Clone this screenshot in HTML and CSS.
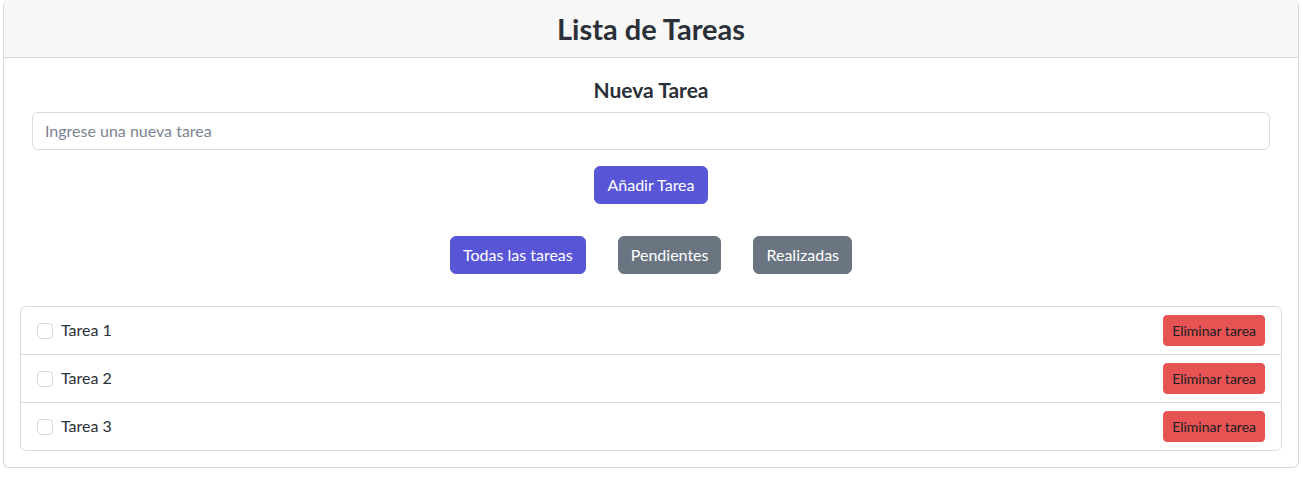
FILE: index.html
```html
<!DOCTYPE html>
<html lang="es">
<head>
<meta charset="utf-8">
<title>Lista de Tareas</title>
<link rel="stylesheet" href="styles.css">
</head>
<body>
<div class="card">
  <div class="card-header">
    <h3 class="title">Lista de Tareas</h3>
  </div>
  <div class="card-body">
    <h5 class="subtitle">Nueva Tarea</h5>
    <div class="input-wrap">
      <input class="form-control" type="text" placeholder="Ingrese una nueva tarea">
    </div>
    <div class="add-row">
      <button class="btn btn-primary">Añadir Tarea</button>
    </div>
    <div class="filters">
      <button class="btn btn-primary">Todas las tareas</button>
      <button class="btn btn-secondary">Pendientes</button>
      <button class="btn btn-secondary">Realizadas</button>
    </div>
    <ul class="list">
      <li class="list-item">
        <label class="item-label"><span class="check"></span>Tarea 1</label>
        <button class="btn btn-sm btn-danger">Eliminar tarea</button>
      </li>
      <li class="list-item">
        <label class="item-label"><span class="check"></span>Tarea 2</label>
        <button class="btn btn-sm btn-danger">Eliminar tarea</button>
      </li>
      <li class="list-item">
        <label class="item-label"><span class="check"></span>Tarea 3</label>
        <button class="btn btn-sm btn-danger">Eliminar tarea</button>
      </li>
    </ul>
  </div>
</div>
</body>
</html>
```
FILE: styles.css
```css
* { box-sizing: border-box; }
body {
  margin: 0;
  padding: 0 3px;
  font-family: Lato, "Noto Sans", sans-serif;
  font-size: 16px;
  color: #2a2f38;
  background: #fff;
}
.card {
  border: 1px solid #d6d8dc;
  border-radius: 6px;
  border-top: none;
  overflow: hidden;
}
.card-header {
  background: #f7f7f7;
  border-bottom: 1px solid #d3d3d3;
  height: 58px;
  padding-top: 12px;
  text-align: center;
}
.title {
  margin: 0;
  font-size: 29px;
  line-height: 34px;
  font-weight: 700;
  color: #2a2f38;
}
.card-body {
  padding: 20px 16px 16px;
}
.subtitle {
  margin: 0 0 10px;
  text-align: center;
  font-size: 21px;
  line-height: 24px;
  font-weight: 700;
}
.input-wrap {
  padding: 0 12px;
}
.form-control {
  display: block;
  width: 100%;
  height: 38px;
  padding: 5px 12px 7px;
  border: 1px solid #d8dbe0;
  border-radius: 6px;
  font-family: inherit;
  font-size: 16px;
  color: #2a2f38;
  outline: none;
}
.form-control::placeholder { color: #7b8491; }
.add-row {
  display: flex;
  justify-content: center;
  margin-top: 16px;
}
.filters {
  display: flex;
  justify-content: center;
  gap: 32px;
  margin-top: 32px;
}
.btn {
  font-family: inherit;
  font-size: 16px;
  line-height: 24px;
  padding: 6px 12px;
  border: 1px solid transparent;
  border-radius: 6px;
  color: #fff;
  cursor: pointer;
}
.btn-primary { background: #5856d6; border-color: #5856d6; }
.btn-secondary { background: #6b7581; border-color: #6b7581; }
.btn-danger { background: #e55353; border-color: #e55353; color: #1c1c22; }
.btn-sm {
  font-size: 14px;
  line-height: 21px;
  padding: 4px 8px;
  border-radius: 4px;
}
.list {
  list-style: none;
  margin: 32px 0 0;
  padding: 0;
  border: 1px solid #d8dbe0;
  border-radius: 6px;
}
.list-item {
  display: flex;
  align-items: center;
  justify-content: space-between;
  padding: 8px 16px;
  border-bottom: 1px solid #d8dbe0;
}
.list-item:last-child { border-bottom: none; }
.item-label {
  display: flex;
  align-items: center;
  gap: 8px;
  line-height: 22px;
  padding-bottom: 2px;
}
.check {
  width: 16px;
  height: 16px;
  border: 1px solid #d8dbe0;
  border-radius: 4px;
  background: #fff;
  margin-top: 2px;
}
```
